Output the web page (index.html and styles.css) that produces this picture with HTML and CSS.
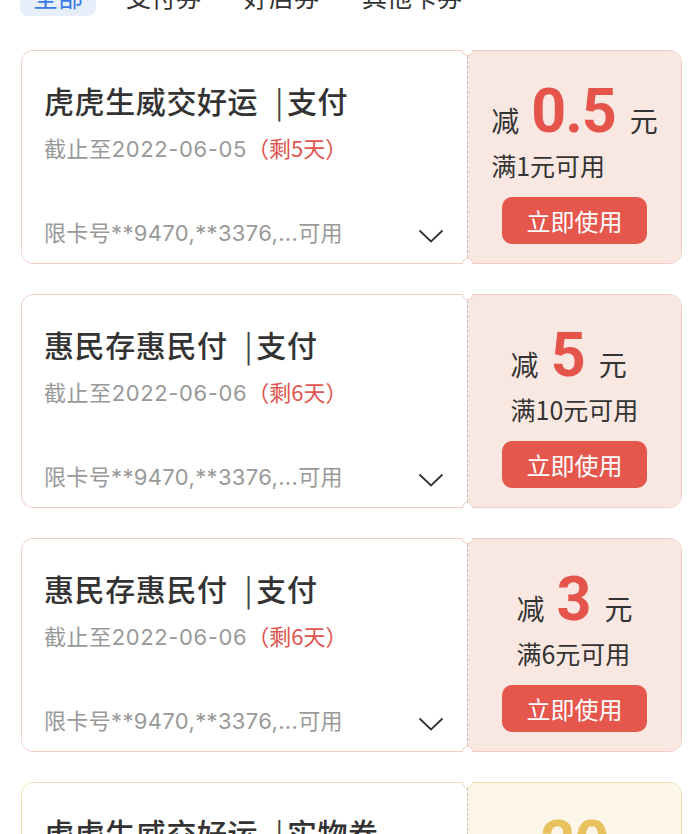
FILE: index.html
```html
<!DOCTYPE html>
<html lang="zh-CN">
<head>
<meta charset="utf-8">
<title>卡券</title>
<link rel="stylesheet" href="styles.css">
</head>
<body>
<div class="page">
  <nav class="tabs">
    <span class="tab active">全部</span>
    <span class="tab">支付券</span>
    <span class="tab">好店券</span>
    <span class="tab">其他卡券</span>
  </nav>

  <div class="list">
    <div class="card">
      <div class="info">
        <div class="title">虎虎生威交好运<span class="sep">|</span>支付</div>
        <div class="date">截止至2022-06-05<span class="left">（剩5天）</span></div>
        <div class="limit"><span>限卡号**9470,**3376,...可用</span>
          <svg class="chev" viewBox="0 0 26 14"><path d="M1.5 1.5 L13 12.5 L24.5 1.5" fill="none" stroke="#333" stroke-width="1.8"/></svg>
        </div>
      </div>
      <div class="deal">
        <div class="box">
          <div class="amount"><span class="unit">减</span><span class="num">0.5</span><span class="unit">元</span></div>
          <div class="cond">满1元可用</div>
        </div>
        <button class="use">立即使用</button>
      </div>
      <i class="notch top"></i><i class="notch bottom"></i>
    </div>

    <div class="card">
      <div class="info">
        <div class="title">惠民存惠民付<span class="sep">|</span>支付</div>
        <div class="date">截止至2022-06-06<span class="left">（剩6天）</span></div>
        <div class="limit"><span>限卡号**9470,**3376,...可用</span>
          <svg class="chev" viewBox="0 0 26 14"><path d="M1.5 1.5 L13 12.5 L24.5 1.5" fill="none" stroke="#333" stroke-width="1.8"/></svg>
        </div>
      </div>
      <div class="deal">
        <div class="box">
          <div class="amount"><span class="unit">减</span><span class="num">5</span><span class="unit">元</span></div>
          <div class="cond">满10元可用</div>
        </div>
        <button class="use">立即使用</button>
      </div>
      <i class="notch top"></i><i class="notch bottom"></i>
    </div>

    <div class="card">
      <div class="info">
        <div class="title">惠民存惠民付<span class="sep">|</span>支付</div>
        <div class="date">截止至2022-06-06<span class="left">（剩6天）</span></div>
        <div class="limit"><span>限卡号**9470,**3376,...可用</span>
          <svg class="chev" viewBox="0 0 26 14"><path d="M1.5 1.5 L13 12.5 L24.5 1.5" fill="none" stroke="#333" stroke-width="1.8"/></svg>
        </div>
      </div>
      <div class="deal">
        <div class="box">
          <div class="amount"><span class="unit">减</span><span class="num">3</span><span class="unit">元</span></div>
          <div class="cond">满6元可用</div>
        </div>
        <button class="use">立即使用</button>
      </div>
      <i class="notch top"></i><i class="notch bottom"></i>
    </div>

    <div class="card gold">
      <div class="info">
        <div class="title">虎虎生威交好运<span class="sep">|</span>实物券</div>
        <div class="date">截止至2022-06-05<span class="left">（剩5天）</span></div>
        <div class="limit"><span>限卡号**9470,**3376,...可用</span></div>
      </div>
      <div class="deal">
        <div class="box">
          <div class="amount"><span class="num">20</span></div>
        </div>
      </div>
      <i class="notch top"></i><i class="notch bottom"></i>
    </div>
  </div>
</div>
</body>
</html>
```

FILE: styles.css
```css
* { box-sizing: border-box; }
html, body { margin: 0; padding: 0; background: #fff; }
body {
  font-family: "Noto Sans CJK SC", "Noto Sans", sans-serif;
  color: #333;
  height: 834px;
  overflow: hidden;
}
.page { padding: 0 6px 0 21px; }

.tabs {
  display: flex;
  align-items: center;
  gap: 17px;
  height: 40px;
  margin-top: -24px;
  margin-left: -1px;
}
.tab {
  font-size: 25px;
  line-height: 40px;
  color: #333;
  padding: 0 13px;
}
.tab.active {
  background: #e6eff9;
  color: #3b7be6;
  border-radius: 8px;
}

.list {
  margin-top: 34px;
  display: flex;
  flex-direction: column;
  gap: 30px;
}

.card {
  position: relative;
  display: flex;
  height: 214px;
  border: 1px solid #f1cdc3;
  border-radius: 12px;
}
.info {
  width: 445px;
  background: #fff;
  border-radius: 12px 0 0 12px;
  padding: 29px 0 15px 22px;
  display: flex;
  flex-direction: column;
}
.title {
  font-size: 30px;
  line-height: 40px;
  font-weight: 500;
  color: #333;
  letter-spacing: 0.6px;
}
.sep {
  display: inline-block;
  font-weight: 400;
  color: #444;
  margin: 0 3px 0 17px;
}
.date {
  margin-top: 12px;
  font-family: "Inter", "Noto Sans CJK SC", sans-serif;
  font-size: 22px;
  line-height: 30px;
  color: #999;
  letter-spacing: 0.6px;
}
.left { color: #e0554d; font-family: "Noto Sans CJK SC", sans-serif; letter-spacing: 0; }
.limit {
  margin-top: auto;
  font-family: "Inter", "Noto Sans CJK SC", sans-serif;
  font-size: 22px;
  line-height: 30px;
  color: #999;
  letter-spacing: 0.35px;
  display: flex;
  align-items: center;
  justify-content: space-between;
  padding-right: 23px;
}
.chev { width: 26px; height: 14px; display: block; margin-top: 6px; }

.deal {
  flex: 1;
  background: #f9e8e2;
  border-left: 1px dashed #c7bcb7;
  border-radius: 0 12px 12px 0;
  display: flex;
  flex-direction: column;
  align-items: center;
  padding-top: 31px;
}
.box {
  display: flex;
  flex-direction: column;
  align-items: flex-start;
}
.amount {
  display: flex;
  align-items: baseline;
  gap: 12px;
  height: 58px;
}
.amount .unit {
  font-size: 28px;
  color: #333;
}
.amount .unit:last-child { margin-left: 2px; }
.num {
  font-family: "Roboto", "Liberation Sans", sans-serif;
  font-weight: 700;
  font-size: 61px;
  line-height: 58px;
  color: #e5544b;
  letter-spacing: -1px;
}
.cond {
  margin-top: 8px;
  font-size: 25px;
  line-height: 34px;
  color: #333;
}
.use {
  margin-top: 15px;
  width: 145px;
  height: 47px;
  border: none;
  border-radius: 10px;
  background: #e5574d;
  color: #fff;
  font-family: "Noto Sans CJK SC", sans-serif;
  font-size: 24px;
  padding: 0;
}

.notch {
  position: absolute;
  left: 440px;
  width: 11px;
  height: 11px;
  border-radius: 50%;
  background: #fff;
  border: 1px solid #f1cdc3;
}
.notch.top { top: -6px; clip-path: inset(5px 0 0 0); }
.notch.bottom { bottom: -6px; clip-path: inset(0 0 5px 0); }

.card.gold { border-color: #eedfb4; }
.card.gold .deal { background: #fbf6e8; }
.card.gold .notch { border-color: #eedfb4; }
.card.gold .num { color: #e8c25e; }
```
